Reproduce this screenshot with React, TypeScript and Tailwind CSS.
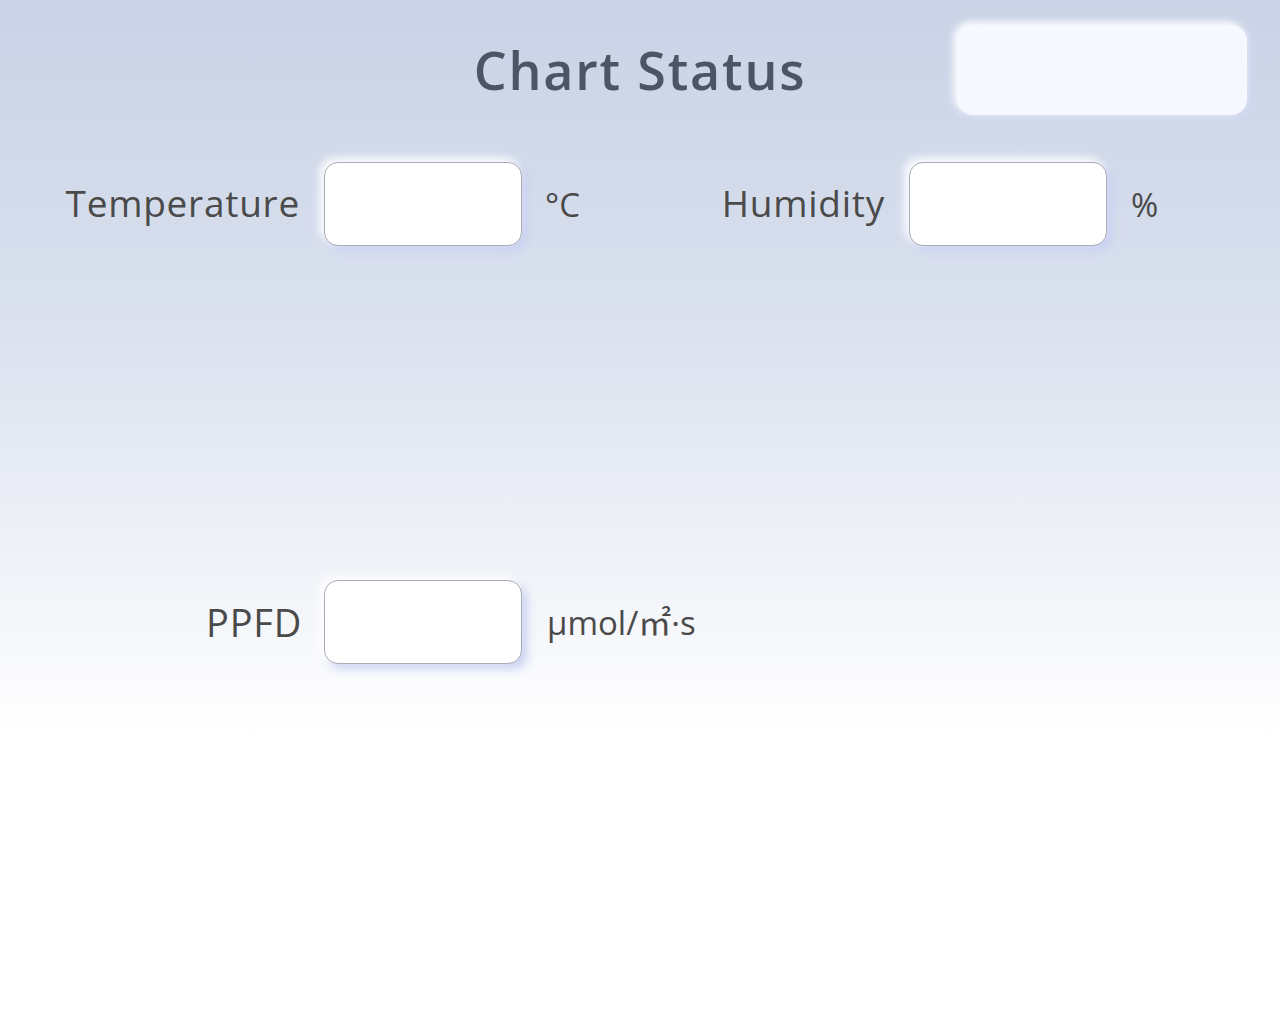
export default function App() {
  const fieldBox =
    "h-[84px] w-[198px] shrink-0 rounded-[14px] border border-[#a9abb6] bg-white shadow-[-4px_-4px_10px_#ffffff,5px_5px_10px_#c9d1f2]";
  const label = "text-[37px] leading-none tracking-[0.02em] text-[#4a4a4a] -translate-y-[2px]";
  const unit = "text-[33px] leading-none text-[#4a4a4a]";

  return (
    <div
      className="flex h-[1024px] w-full flex-col bg-[linear-gradient(180deg,#c9d3e6_0%,#d9e0ee_30%,#edf0f7_52%,#ffffff_72%,#ffffff_100%)]"
      style={{ fontFamily: "'Open Sans', 'Noto Sans CJK JP', sans-serif" }}
    >
      {/* Header */}
      <div className="grid grid-cols-[1fr_auto_1fr] items-center px-[33px] pt-[25px]">
        <div />
        <h1 className="text-[52px] font-semibold leading-none tracking-[0.035em] text-[#4b5565]">
          Chart Status
        </h1>
        <div className="h-[90px] w-[290px] justify-self-end rounded-[16px] bg-[#f5f8fe] shadow-[-3px_-3px_8px_#ffffff,3px_3px_8px_#d2d9f2]" />
      </div>

      {/* Temperature / Humidity */}
      <div className="mt-[47px] flex items-center">
        <div className="flex w-[300px] justify-end">
          <span className={label}>Temperature</span>
        </div>
        <div className={`ml-[24px] ${fieldBox}`} />
        <span className={`ml-[23px] w-[175px] ${unit}`}>°C</span>
        <div className="flex w-[165px] justify-end">
          <span className={label}>Humidity</span>
        </div>
        <div className={`ml-[24px] ${fieldBox}`} />
        <span className={`ml-[24px] ${unit}`}>%</span>
      </div>

      {/* PPFD */}
      <div className="mt-[334px] flex items-center">
        <div className="flex w-[302px] justify-end">
          <span className="text-[38px] leading-none tracking-[0.02em] text-[#4a4a4a]">PPFD</span>
        </div>
        <div className={`ml-[22px] ${fieldBox}`} />
        <span className={`ml-[25px] ${unit}`}>μmol/㎡·s</span>
      </div>
    </div>
  );
}
